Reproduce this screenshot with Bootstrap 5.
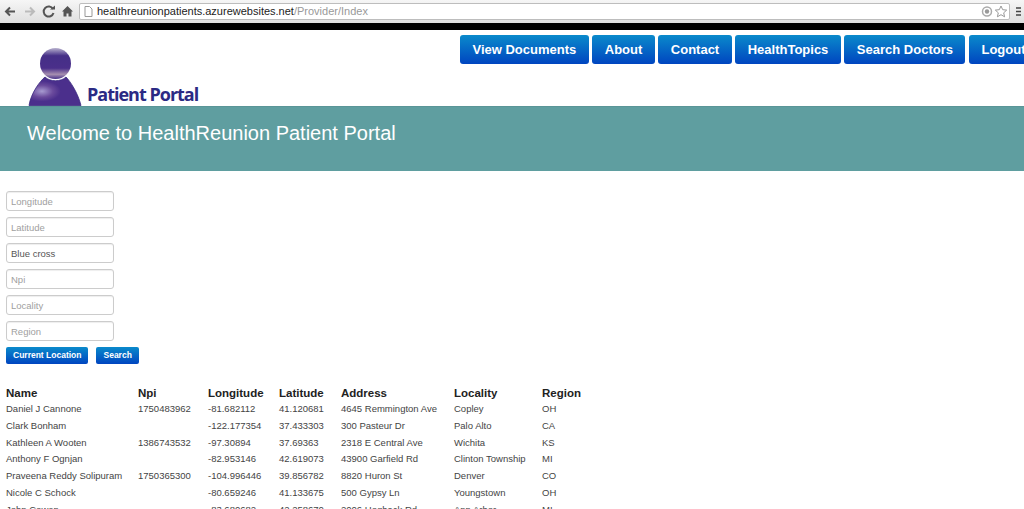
<!DOCTYPE html>
<html lang="en">
<head>
<meta charset="utf-8">
<title>Patient Portal</title>
<link rel="stylesheet" href="https://cdn.jsdelivr.net/npm/bootstrap@5.3.0/dist/css/bootstrap.min.css">
<style>
html,body{height:509px;overflow:hidden;background:#fff;}
body{font-family:"Liberation Sans",Arial,sans-serif;color:#333;font-size:10.5px;}
.chrome-bar{height:23px;background:linear-gradient(#f6f6f6,#dfdfdf);padding:3px 3px 3px 0;}
.chrome-tools{width:79px;flex:none;}
.chrome-tools svg{display:block;}
.omni{flex:1;height:17px;background:#fff;border:1px solid #bdbdbd;border-radius:2px;font-size:11px;line-height:15px;padding-left:4px;color:#222;}
.omni span{color:#999;}
.chrome-menu{width:11px;flex:none;}
.blackbar{height:7px;background:#000;}
.page-head{height:76px;}
.logo-wrap{width:200px;flex:none;padding:15px 0 0 28px;height:76px;}
.logo-text{font-family:"Open Sans",sans-serif;font-weight:700;font-size:18px;letter-spacing:-1px;color:#2b2a84;line-height:18px;white-space:nowrap;margin:0 0 3px 3px;}
.top-nav{padding-top:5px;gap:3.5px;margin-right:-14px;flex:none;}
.nav-blue{display:block;height:29px;line-height:29px;padding:0 12.5px;font-size:13px;font-weight:700;color:#fff;background:linear-gradient(#0a8acb,#0045c0);border-radius:3px;text-decoration:none;white-space:nowrap;}
.hero-band{height:65px;background:#5f9ea0;padding:14px 27px;border-top:1px solid #5a9597;}
.hero-band h1{font-size:20px;line-height:24px;color:#fff;margin:0;font-weight:400;}
.search-form{padding:20px 6px 0;}
.field{display:block;width:108px;height:20px;border:1px solid #ccc;border-radius:3px;margin-bottom:6px;padding:0 4px;font-size:9.5px;color:#555;box-shadow:inset 0 1px 1px rgba(0,0,0,.07);font-family:inherit;}
.field::placeholder{color:#a0a0a0;opacity:1;}
.mini-btn{display:block;height:17px;line-height:17px;padding:0 7px;border:0;border-radius:2px;background:linear-gradient(#0a8acb,#0045c0);color:#fff;font-size:8.5px;font-weight:700;font-family:inherit;}
.provider-grid{margin:21px 0 0 0;border-collapse:collapse;}
.provider-grid th{font-size:11.5px;font-weight:700;color:#222;padding:0;height:16px;line-height:16px;}
.provider-grid td{font-size:9.5px;color:#444;padding:0;height:16.8px;line-height:16.8px;white-space:nowrap;}
.provider-grid th,.provider-grid td{padding-left:6px;}
.c1{width:132px}.c2{width:70px}.c3{width:71px}.c4{width:62px}.c5{width:113px}.c6{width:88px}.c7{width:45px}
</style>
</head>
<body>
<div class="chrome-bar d-flex align-items-center">
  <div class="chrome-tools d-flex align-items-center">
    <svg width="79" height="17" viewBox="0 0 79 17">
      <path d="M6 8.5h9M10 4.5l-4 4 4 4" fill="none" stroke="#555" stroke-width="2"/>
      <path d="M25 8.5h9M30 4.5l4 4-4 4" fill="none" stroke="#bbb" stroke-width="2"/>
      <path d="M53 6a5 5 0 1 0 .5 4" fill="none" stroke="#555" stroke-width="2"/><path d="M50 6.5h5v-4z" fill="#555"/>
      <path d="M67.500 3l5.500 5.500h-1.500v5h-3v-3h-2v3h-3v-5H62z" fill="#555"/>
    </svg>
  </div>
  <div class="omni d-flex align-items-center">
    <svg class="me-1 flex-none" width="9" height="11" viewBox="0 0 9 11"><path d="M1 .5h4.500L8 3v7.500H1z" fill="#fff" stroke="#999"/></svg>
    <div class="flex-grow-1">healthreunionpatients.azurewebsites.net<span>/Provider/Index</span></div>
    <svg width="28" height="13" viewBox="0 0 28 13"><circle cx="6" cy="6.500" r="4.500" fill="none" stroke="#aaa" stroke-width="1.500"/><circle cx="6" cy="6.500" r="2.200" fill="#999"/><path d="M20 1l1.700 3.700 4 .4-3 2.700.9 4-3.600-2.100-3.600 2.100.9-4-3-2.700 4-.4z" fill="#fff" stroke="#999"/></svg>
  </div>
  <div class="chrome-menu d-flex justify-content-end">
    <svg width="5" height="10" viewBox="0 0 5 10"><path d="M0 1h5M0 4.500h5M0 8h5" stroke="#444" stroke-width="1.500"/></svg>
  </div>
</div>
<div class="blackbar"></div>
<header class="page-head d-flex justify-content-between overflow-hidden">
  <div class="logo-wrap d-flex align-items-end">
    <svg width="56" height="59" viewBox="0 0 56 59" class="flex-none">
      <defs>
        <linearGradient id="h" x1="0" y1="0" x2="0" y2="1"><stop offset="0" stop-color="#b9b3cf"/><stop offset=".25" stop-color="#452f87"/><stop offset=".65" stop-color="#4a2f8a"/><stop offset=".85" stop-color="#a68fb0"/><stop offset="1" stop-color="#47318a"/></linearGradient>
        <radialGradient id="b" cx=".25" cy=".5" r=".6"><stop offset="0" stop-color="#a79ad0"/><stop offset=".35" stop-color="#6a4a9c"/><stop offset=".6" stop-color="#4b2f8c"/></radialGradient>
      </defs>
      <path d="M17 30C12 34 3 46 1 58.500h52C50 46 42 34 38 30c-5 5-16 5-21 0z" fill="url(#b)" stroke="#3a2a80" stroke-width=".8"/>
      <circle cx="27.500" cy="16.500" r="15.500" fill="url(#h)"/>
    </svg>
    <div class="logo-text">Patient Portal</div>
  </div>
  <nav class="top-nav d-flex">
    <a class="nav-blue" href="#">View Documents</a>
    <a class="nav-blue" href="#">About</a>
    <a class="nav-blue" href="#">Contact</a>
    <a class="nav-blue" href="#">HealthTopics</a>
    <a class="nav-blue" href="#">Search Doctors</a>
    <a class="nav-blue" href="#">Logout</a>
  </nav>
</header>
<div class="hero-band"><h1>Welcome to HealthReunion Patient Portal</h1></div>
<main>
  <form class="search-form">
    <input class="field" type="text" placeholder="Longitude">
    <input class="field" type="text" placeholder="Latitude">
    <input class="field" type="text" value="Blue cross">
    <input class="field" type="text" placeholder="Npi">
    <input class="field" type="text" placeholder="Locality">
    <input class="field" type="text" placeholder="Region">
    <div class="d-flex gap-2">
      <button type="button" class="mini-btn">Current Location</button>
      <button type="button" class="mini-btn">Search</button>
    </div>
  </form>
  <table class="provider-grid">
    <thead><tr><th class="c1">Name</th><th class="c2">Npi</th><th class="c3">Longitude</th><th class="c4">Latitude</th><th class="c5">Address</th><th class="c6">Locality</th><th class="c7">Region</th></tr></thead>
    <tbody>
      <tr><td>Daniel J Cannone</td><td>1750483962</td><td>-81.682112</td><td>41.120681</td><td>4645 Remmington Ave</td><td>Copley</td><td>OH</td></tr>
      <tr><td>Clark Bonham</td><td></td><td>-122.177354</td><td>37.433303</td><td>300 Pasteur Dr</td><td>Palo Alto</td><td>CA</td></tr>
      <tr><td>Kathleen A Wooten</td><td>1386743532</td><td>-97.30894</td><td>37.69363</td><td>2318 E Central Ave</td><td>Wichita</td><td>KS</td></tr>
      <tr><td>Anthony F Ognjan</td><td></td><td>-82.953146</td><td>42.619073</td><td>43900 Garfield Rd</td><td>Clinton Township</td><td>MI</td></tr>
      <tr><td>Praveena Reddy Solipuram</td><td>1750365300</td><td>-104.996446</td><td>39.856782</td><td>8820 Huron St</td><td>Denver</td><td>CO</td></tr>
      <tr><td>Nicole C Schock</td><td></td><td>-80.659246</td><td>41.133675</td><td>500 Gypsy Ln</td><td>Youngstown</td><td>OH</td></tr>
      <tr><td>John Cowen</td><td></td><td>-83.680682</td><td>42.258670</td><td>2006 Hogback Rd</td><td>Ann Arbor</td><td>MI</td></tr>
    </tbody>
  </table>
</main>
<script src="https://cdn.jsdelivr.net/npm/bootstrap@5.3.0/dist/js/bootstrap.bundle.min.js"></script>
</body>
</html>
